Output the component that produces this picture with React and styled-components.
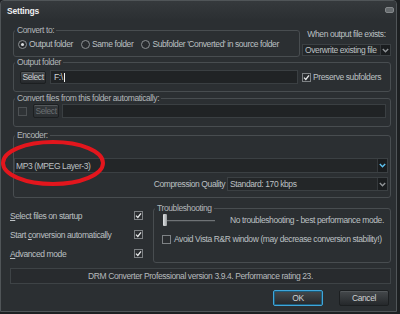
import React from "react"
import styled, { createGlobalStyle } from "styled-components"

const GlobalStyle = createGlobalStyle`
  html, body {
    margin: 0;
    padding: 0;
    background: #1d2022;
  }
  body {
    font-family: "Liberation Sans", Arial, sans-serif;
    font-size: 8.5px;
    letter-spacing: -0.4px;
    color: #bcc0c3;
  }
  * {
    box-sizing: border-box;
  }
`

const Window = styled.div`
  position: relative;
  width: 397px;
  height: 312px;
  background: #2b2f32;
  border: 1px solid #505558;
  border-radius: 4px 4px 0 0;
  overflow: hidden;
`

const TitleBar = styled.div`
  height: 19px;
  display: flex;
  align-items: center;
  justify-content: space-between;
  padding: 0 2px 0 6px;
  background: linear-gradient(#35393c, #2b2f32);
`

const Title = styled.span`
  font-weight: bold;
  color: #eef0f1;
  letter-spacing: -0.2px;
`

const MinButton = styled.span`
  width: 9px;
  height: 6px;
  border-radius: 2px;
  background: #666b6e;
  border: 1px solid #84888b;
  margin-top: -1px;
`

const Content = styled.div`
  display: flex;
  flex-direction: column;
  padding: 0 5px 0 9px;
`

const Row = styled.div`
  display: flex;
  margin-top: ${(p) => p.$top || 0}px;
  margin-left: ${(p) => p.$left || 0}px;
  gap: ${(p) => p.$gap || 0}px;
`

const Group = styled.fieldset`
  margin: 0;
  padding: 0;
  min-width: 0;
  width: ${(p) => p.$w || "auto"};
  flex: ${(p) => (p.$w ? "none" : 1)};
  border: 1px solid #484d50;
  border-radius: 3px;
`

const Legend = styled.legend`
  margin-left: 1px;
  padding: 0 2px;
  line-height: 10px;
  color: #b3b7ba;
`

const GroupBody = styled.div`
  padding: ${(p) => p.$pad};
  display: flex;
  flex-direction: ${(p) => (p.$col ? "column" : "row")};
  align-items: ${(p) => (p.$col ? "stretch" : "center")};
`

const RadioItem = styled.label`
  display: flex;
  align-items: center;
  gap: 2px;
  height: 12px;
  margin-right: 8px;
  white-space: nowrap;
`

const RadioDot = styled.span`
  width: 9px;
  height: 9px;
  border-radius: 50%;
  border: 1px solid #8c9093;
  background: #282b2e;
  display: flex;
  align-items: center;
  justify-content: center;
  &::after {
    content: "";
    width: 3px;
    height: 3px;
    border-radius: 50%;
    background: ${(p) => (p.$on ? "#dcdfe1" : "transparent")};
  }
`

const SideCol = styled.div`
  width: 89px;
  padding-top: 4px;
  display: flex;
  flex-direction: column;
  gap: 5px;
`

const SideLabel = styled.div`
  text-align: center;
  line-height: 10px;
  white-space: nowrap;
`

const SelectBox = styled.div`
  display: flex;
  align-items: center;
  height: ${(p) => p.$h}px;
  width: ${(p) => p.$w || "auto"};
  background: #232628;
  border: 1px solid #3b4043;
  padding-left: ${(p) => p.$pl ?? 2}px;
`

const SelectText = styled.span`
  flex: 1;
  white-space: nowrap;
  overflow: hidden;
`

const ChevronBox = styled.span`
  align-self: stretch;
  width: 10px;
  background: #1a1d1f;
  border-left: 1px solid #35393c;
  display: flex;
  align-items: center;
  justify-content: center;
`

const Button = styled.button`
  font: inherit;
  letter-spacing: inherit;
  width: ${(p) => p.$w}px;
  height: ${(p) => p.$h}px;
  padding: 0;
  flex: none;
  color: ${(p) => (p.disabled ? "#6b6f72" : "#cdd0d2")};
  background: ${(p) =>
    p.disabled
      ? "linear-gradient(#34383b, #2c3033)"
      : "linear-gradient(#45494c, #25282b)"};
  border: 1px solid ${(p) => (p.$primary ? "#3fa6da" : "#1c1f21")};
  box-shadow: ${(p) =>
    p.$primary ? "inset 0 0 0 1px #1d5a78" : "inset 0 1px 0 #54585b"};
  border-radius: 2px;
`

const TextField = styled.div`
  height: ${(p) => p.$h}px;
  width: ${(p) => p.$w || "auto"};
  flex: ${(p) => (p.$w ? "none" : 1)};
  margin-left: ${(p) => p.$ml || 0}px;
  margin-right: ${(p) => p.$mr || 0}px;
  background: #202325;
  border: 1px solid #3a3f42;
  padding-left: 3px;
  display: flex;
  align-items: center;
  color: #d2d5d7;
`

const Caret = styled.span`
  width: 1px;
  height: 9px;
  margin-left: 1px;
  background: #f0f2f3;
`

const CheckLabel = styled.label`
  display: flex;
  align-items: center;
  gap: 2px;
  margin-left: ${(p) => p.$ml || 0}px;
  white-space: nowrap;
`

const Box = styled.span`
  width: 9px;
  height: 9px;
  flex: none;
  margin-right: ${(p) => p.$mr || 0}px;
  border: 1px solid ${(p) => (p.$dim ? "#4d5154" : "#7e8285")};
  background: ${(p) => (p.$dim ? "#2f3336" : "#2a2d30")};
  display: flex;
  align-items: center;
  justify-content: center;
`

const EncoderRow = styled.div`
  display: flex;
  justify-content: flex-end;
  align-items: center;
  gap: 2px;
  margin-top: 4px;
`

const OptionsCol = styled.div`
  width: 133px;
  padding-top: 3px;
  display: flex;
  flex-direction: column;
`

const OptionRow = styled.div`
  height: 19px;
  display: flex;
  align-items: center;
  justify-content: space-between;
`

const U = styled.span`
  text-decoration: underline;
`

const SliderRow = styled.div`
  display: flex;
  align-items: center;
  height: 12px;
`

const Slider = styled.div`
  display: flex;
  align-items: center;
  width: 52px;
  margin-left: 1px;
  margin-right: 15px;
`

const Thumb = styled.span`
  width: 4px;
  height: 12px;
  border-radius: 1px;
  background: linear-gradient(90deg, #e2e5e7, #9a9ea1);
`

const Track = styled.span`
  flex: 1;
  height: 2px;
  margin-top: 2px;
  background: #6f7376;
  border-bottom: 1px solid #3a3e41;
`

const WarnRow = styled.div`
  display: flex;
  align-items: center;
  height: 10px;
  margin-top: 8px;
  gap: 3px;
  white-space: nowrap;
`

const StatusBar = styled.div`
  margin-top: 5px;
  height: 16px;
  line-height: 14px;
  text-align: center;
  background: #282b2e;
  border: 1px solid #3e4346;
  color: #b6babd;
`

const Footer = styled.div`
  margin-top: 6px;
  padding-right: 2px;
  display: flex;
  justify-content: flex-end;
  gap: 16px;
`

const Annotation = styled.svg`
  position: absolute;
  left: -1px;
  top: -1px;
  pointer-events: none;
`

const Chevron = ({ color }) => (
  <svg width="7" height="5" viewBox="0 0 7 5">
    <path d="M0.8 1 L3.5 3.8 L6.2 1" fill="none" stroke={color} strokeWidth="1.4" />
  </svg>
)

const Tick = () => (
  <svg width="7" height="7" viewBox="0 0 7 7">
    <path d="M1 3.6 L2.8 5.4 L6 1.3" fill="none" stroke="#e8eaeb" strokeWidth="1.3" />
  </svg>
)

const Select = ({ children, h, w, pl, chevron = "#8f9396" }) => (
  <SelectBox $h={h} $w={w} $pl={pl}>
    <SelectText>{children}</SelectText>
    <ChevronBox>
      <Chevron color={chevron} />
    </ChevronBox>
  </SelectBox>
)

const Check = ({ on, dim, mr }) => (
  <Box $dim={dim} $mr={mr}>
    {on && <Tick />}
  </Box>
)

export default function App() {
  return (
    <>
      <GlobalStyle />
      <Window>
        <TitleBar>
          <Title>Settings</Title>
          <MinButton />
        </TitleBar>
        <Content>
          <Row $top={5} $left={3} $gap={2}>
            <Group $w="287px">
              <Legend>Convert to:</Legend>
              <GroupBody $pad="3px 4px 6px">
                <RadioItem>
                  <RadioDot $on />
                  Output folder
                </RadioItem>
                <RadioItem>
                  <RadioDot />
                  Same folder
                </RadioItem>
                <RadioItem>
                  <RadioDot />
                  Subfolder 'Converted' in source folder
                </RadioItem>
              </GroupBody>
            </Group>
            <SideCol>
              <SideLabel>When output file exists:</SideLabel>
              <Select h={12}>Overwrite existing file</Select>
            </SideCol>
          </Row>

          <Row $left={3}>
            <Group>
              <Legend>Output folder</Legend>
              <GroupBody $pad="3px 4px 7px 6px">
                <Button $w={26} $h={13}>Select</Button>
                <TextField $h={14} $w="248px" $ml={4}>
                  F:\<Caret />
                </TextField>
                <CheckLabel $ml={4}>
                  <Check on />
                  Preserve subfolders
                </CheckLabel>
              </GroupBody>
            </Group>
          </Row>

          <Row $top={1} $left={3}>
            <Group>
              <Legend>Convert files from this folder automatically:</Legend>
              <GroupBody $pad="1px 4px 8px 4px">
                <Check dim mr={6} />
                <Button $w={26} $h={14} disabled>
                  Select
                </Button>
                <TextField $h={14} $ml={3} />
              </GroupBody>
            </Group>
          </Row>

          <Row $top={3} $left={3}>
            <Group>
              <Legend>Encoder:</Legend>
              <GroupBody $col $pad="18px 2px 6px 0">
                <Select h={15} pl={1} chevron="#5cc0ee">
                  MP3 (MPEG Layer-3)
                </Select>
                <EncoderRow>
                  Compression Quality
                  <Select h={14} w="161px">
                    Standard: 170 kbps
                  </Select>
                </EncoderRow>
              </GroupBody>
            </Group>
          </Row>

          <Row $top={5} $gap={10}>
            <OptionsCol>
              <OptionRow>
                <span>
                  <U>S</U>elect files on startup
                </span>
                <Check on />
              </OptionRow>
              <OptionRow>
                <span>
                  Start <U>c</U>onversion automatically
                </span>
                <Check on />
              </OptionRow>
              <OptionRow>
                <span>
                  <U>A</U>dvanced mode
                </span>
                <Check on />
              </OptionRow>
            </OptionsCol>
            <Group>
              <Legend>Troubleshooting</Legend>
              <GroupBody $col $pad="1px 4px 18px 8px">
                <SliderRow>
                  <Slider>
                    <Thumb />
                    <Track />
                  </Slider>
                  No troubleshooting - best performance mode.
                </SliderRow>
                <WarnRow>
                  <Check />
                  Avoid Vista R&amp;R window (may decrease conversion stability!)
                </WarnRow>
              </GroupBody>
            </Group>
          </Row>

          <StatusBar>
            DRM Converter Professional version 3.9.4. Performance rating 23.
          </StatusBar>

          <Footer>
            <Button $w={50} $h={16} $primary>
              OK
            </Button>
            <Button $w={50} $h={16}>
              Cancel
            </Button>
          </Footer>
        </Content>
        <Annotation width="400" height="314" viewBox="0 0 400 314">
          <ellipse
            cx="53"
            cy="163"
            rx="50"
            ry="21"
            fill="none"
            stroke="#e3161d"
            strokeWidth="4"
          />
        </Annotation>
      </Window>
    </>
  )
}
